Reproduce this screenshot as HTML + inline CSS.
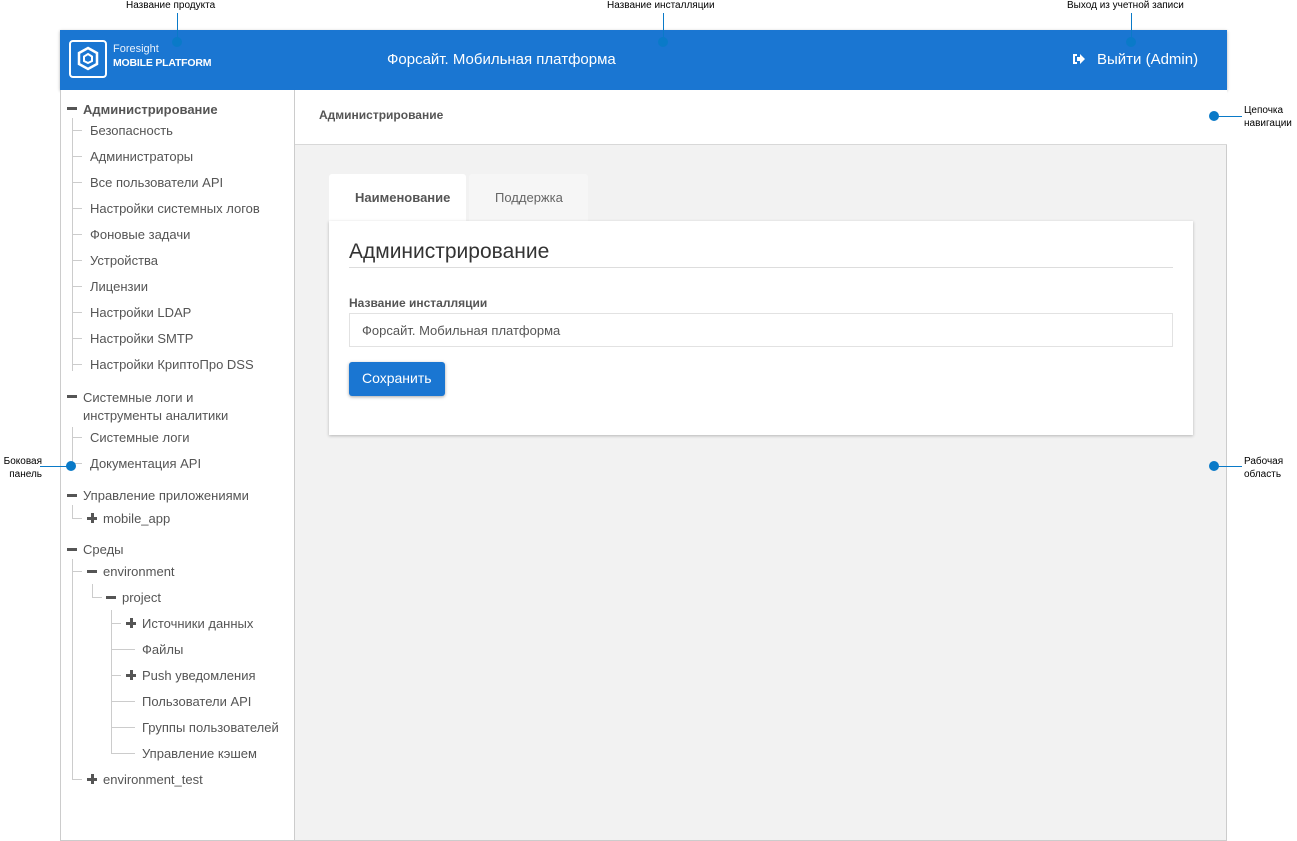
<!DOCTYPE html>
<html><head><meta charset="utf-8"><style>
*{margin:0;padding:0;box-sizing:border-box}
body{width:1297px;height:841px;background:#fff;position:relative;font-family:"Liberation Sans","DejaVu Sans",sans-serif;overflow:hidden}
.a{position:absolute;white-space:nowrap}
.ann{font-size:10px;color:#000}
.t{font-size:13px;color:#555;position:absolute;white-space:nowrap;line-height:16px;margin-top:1px}
.vl{position:absolute;width:1px;background:#ccc}
.hl{position:absolute;height:1px;background:#ccc}
.mi{position:absolute;width:10px;height:3px;background:#555}
.pl{position:absolute;width:10px;height:10px}
.pl:before{content:"";position:absolute;left:0;top:4px;width:10px;height:3px;background:#555}
.pl:after{content:"";position:absolute;left:4px;top:0;width:3px;height:10px;background:#555}
.dot{position:absolute;width:10px;height:10px;border-radius:50%;background:#0a7ac8}
.ln{position:absolute;background:#0a7ac8}
</style></head><body>
<div class="a" style="left:60px;top:30px;width:1167px;height:60px;background:#1a76d2;box-shadow:0 1px 3px rgba(0,0,0,.3)"></div>
<div class="a" style="left:69px;top:40px;width:38px;height:38px;border:2px solid #fff;border-radius:4px"></div>
<svg class="a" style="left:76px;top:46px" width="24" height="26" viewBox="0 0 24 26"><path d="M12 2 L21 7 L21 18 L12 23 L3 18 L3 7 Z" fill="none" stroke="#fff" stroke-width="2.5"/><path d="M12 8 L16 10.5 L16 15 L12 17 L8 15 L8 10.5 Z" fill="none" stroke="#fff" stroke-width="2"/></svg>
<div class="a" style="left:113px;top:43px;font-size:11px;color:#e8f0fb">Foresight</div>
<div class="a" style="left:113px;top:57px;font-size:10.5px;font-weight:bold;color:#fff;letter-spacing:-0.2px">MOBILE PLATFORM</div>
<div class="a" style="left:387px;top:51px;font-size:15px;color:#fff">Форсайт. Мобильная платформа</div>
<svg class="a" style="left:1072px;top:53px" width="13" height="12" viewBox="0 0 13 12"><path d="M1 1h4v2H3v6h2v2H1z" fill="#fff"/><path d="M5 4h3V1l5 5-5 5V8H5z" fill="#fff"/></svg>
<div class="a" style="left:1097px;top:51px;font-size:15px;color:#fff">Выйти (Admin)</div>
<div class="a" style="left:60px;top:90px;width:235px;height:751px;border:1px solid #ccc;border-top:none;background:#fff"></div>
<div class="a" style="left:295px;top:90px;width:932px;height:751px;background:#f2f2f2;border-right:1px solid #ccc;border-bottom:1px solid #ccc"></div>
<div class="a" style="left:295px;top:90px;width:932px;height:55px;background:#fff;border-bottom:1px solid #d8d8d8"></div>
<div class="a" style="left:319px;top:108px;font-size:12px;font-weight:bold;color:#555">Администрирование</div>
<div class="a" style="left:329px;top:174px;width:137px;height:50px;background:#fff;border-radius:3px 3px 0 0"></div>
<div class="a" style="left:469px;top:174px;width:119px;height:47px;background:#f6f6f6;border-radius:3px 3px 0 0"></div>
<div class="a" style="left:355px;top:190px;font-size:13px;font-weight:bold;color:#555">Наименование</div>
<div class="a" style="left:495px;top:190px;font-size:13px;color:#666">Поддержка</div>
<div class="a" style="left:329px;top:221px;width:864px;height:214px;background:#fff;box-shadow:0 1px 3px rgba(0,0,0,.25)"></div>
<div class="a" style="left:349px;top:240px;font-size:21px;color:#333">Администрирование</div>
<div class="a" style="left:349px;top:267px;width:824px;height:1px;background:#ddd"></div>
<div class="a" style="left:349px;top:296px;font-size:12px;font-weight:bold;color:#555">Название инсталляции</div>
<div class="a" style="left:349px;top:313px;width:824px;height:34px;border:1px solid #e2e2e2;background:#fff"></div>
<div class="a" style="left:362px;top:323px;font-size:13px;color:#555">Форсайт. Мобильная платформа</div>
<div class="a" style="left:349px;top:362px;width:96px;height:34px;background:#1a76d2;border-radius:3px;box-shadow:0 1px 3px rgba(0,0,0,.35)"></div>
<div class="a" style="left:362px;top:370px;font-size:14px;color:#fff">Сохранить</div>
<div class="mi" style="left:67px;top:107px"></div><div class="t" style="left:83px;top:101px;font-weight:bold">Администрирование</div>
<div class="vl" style="left:72px;top:118px;height:253px"></div>
<div class="hl" style="left:72px;top:130px;width:10px"></div><div class="t" style="left:90px;top:122px">Безопасность</div>
<div class="hl" style="left:72px;top:156px;width:10px"></div><div class="t" style="left:90px;top:148px">Администраторы</div>
<div class="hl" style="left:72px;top:182px;width:10px"></div><div class="t" style="left:90px;top:174px">Все пользователи API</div>
<div class="hl" style="left:72px;top:208px;width:10px"></div><div class="t" style="left:90px;top:200px">Настройки системных логов</div>
<div class="hl" style="left:72px;top:234px;width:10px"></div><div class="t" style="left:90px;top:226px">Фоновые задачи</div>
<div class="hl" style="left:72px;top:260px;width:10px"></div><div class="t" style="left:90px;top:252px">Устройства</div>
<div class="hl" style="left:72px;top:286px;width:10px"></div><div class="t" style="left:90px;top:278px">Лицензии</div>
<div class="hl" style="left:72px;top:312px;width:10px"></div><div class="t" style="left:90px;top:304px">Настройки LDAP</div>
<div class="hl" style="left:72px;top:338px;width:10px"></div><div class="t" style="left:90px;top:330px">Настройки SMTP</div>
<div class="hl" style="left:72px;top:364px;width:10px"></div><div class="t" style="left:90px;top:356px">Настройки КриптоПро DSS</div>
<div class="mi" style="left:67px;top:395px"></div><div class="t" style="left:83px;top:388px;line-height:18px">Системные логи и<br>инструменты аналитики</div>
<div class="vl" style="left:72px;top:427px;height:37px"></div>
<div class="hl" style="left:72px;top:437px;width:10px"></div><div class="t" style="left:90px;top:429px">Системные логи</div>
<div class="hl" style="left:72px;top:463px;width:10px"></div><div class="t" style="left:90px;top:455px">Документация API</div>
<div class="mi" style="left:67px;top:494px"></div><div class="t" style="left:83px;top:487px">Управление приложениями</div>
<div class="vl" style="left:72px;top:505px;height:13px"></div><div class="hl" style="left:72px;top:518px;width:10px"></div>
<div class="pl" style="left:87px;top:513px"></div><div class="t" style="left:103px;top:510px">mobile_app</div>
<div class="mi" style="left:67px;top:548px"></div><div class="t" style="left:83px;top:541px">Среды</div>
<div class="vl" style="left:72px;top:559px;height:220px"></div>
<div class="hl" style="left:72px;top:571px;width:10px"></div>
<div class="mi" style="left:87px;top:570px"></div><div class="t" style="left:103px;top:563px">environment</div>
<div class="vl" style="left:92px;top:584px;height:13px"></div><div class="hl" style="left:92px;top:597px;width:10px"></div>
<div class="mi" style="left:106px;top:596px"></div><div class="t" style="left:122px;top:589px">project</div>
<div class="vl" style="left:111px;top:610px;height:143px"></div>
<div class="hl" style="left:111px;top:623px;width:10px"></div><div class="pl" style="left:126px;top:618px"></div><div class="t" style="left:142px;top:615px">Источники данных</div>
<div class="hl" style="left:111px;top:649px;width:24px"></div><div class="t" style="left:142px;top:641px">Файлы</div>
<div class="hl" style="left:111px;top:675px;width:10px"></div><div class="pl" style="left:126px;top:670px"></div><div class="t" style="left:142px;top:667px">Push уведомления</div>
<div class="hl" style="left:111px;top:701px;width:24px"></div><div class="t" style="left:142px;top:693px">Пользователи API</div>
<div class="hl" style="left:111px;top:727px;width:24px"></div><div class="t" style="left:142px;top:719px">Группы пользователей</div>
<div class="hl" style="left:111px;top:753px;width:24px"></div><div class="t" style="left:142px;top:745px">Управление кэшем</div>
<div class="hl" style="left:72px;top:779px;width:10px"></div><div class="pl" style="left:87px;top:774px"></div><div class="t" style="left:103px;top:771px">environment_test</div>
<div class="a ann" style="left:126px;top:0px">Название продукта</div>
<div class="ln" style="left:177px;top:13px;width:1px;height:30px"></div><div class="dot" style="left:172px;top:37px"></div>
<div class="a ann" style="left:607px;top:0px">Название инсталляции</div>
<div class="ln" style="left:663px;top:13px;width:1px;height:30px"></div><div class="dot" style="left:658px;top:37px"></div>
<div class="a ann" style="left:1067px;top:0px">Выход из учетной записи</div>
<div class="ln" style="left:1131px;top:13px;width:1px;height:30px"></div><div class="dot" style="left:1126px;top:37px"></div>
<div class="dot" style="left:1209px;top:111px"></div><div class="ln" style="left:1214px;top:116px;width:28px;height:1px"></div>
<div class="a ann" style="left:1244px;top:104px;line-height:13px">Цепочка<br>навигации</div>
<div class="dot" style="left:1209px;top:461px"></div><div class="ln" style="left:1214px;top:466px;width:28px;height:1px"></div>
<div class="a ann" style="left:1244px;top:455px;line-height:13px">Рабочая<br>область</div>
<div class="dot" style="left:66px;top:461px"></div><div class="ln" style="left:40px;top:466px;width:28px;height:1px"></div>
<div class="a ann" style="left:0px;top:455px;line-height:13px;text-align:right;width:42px">Боковая<br>панель</div>
</body></html>
